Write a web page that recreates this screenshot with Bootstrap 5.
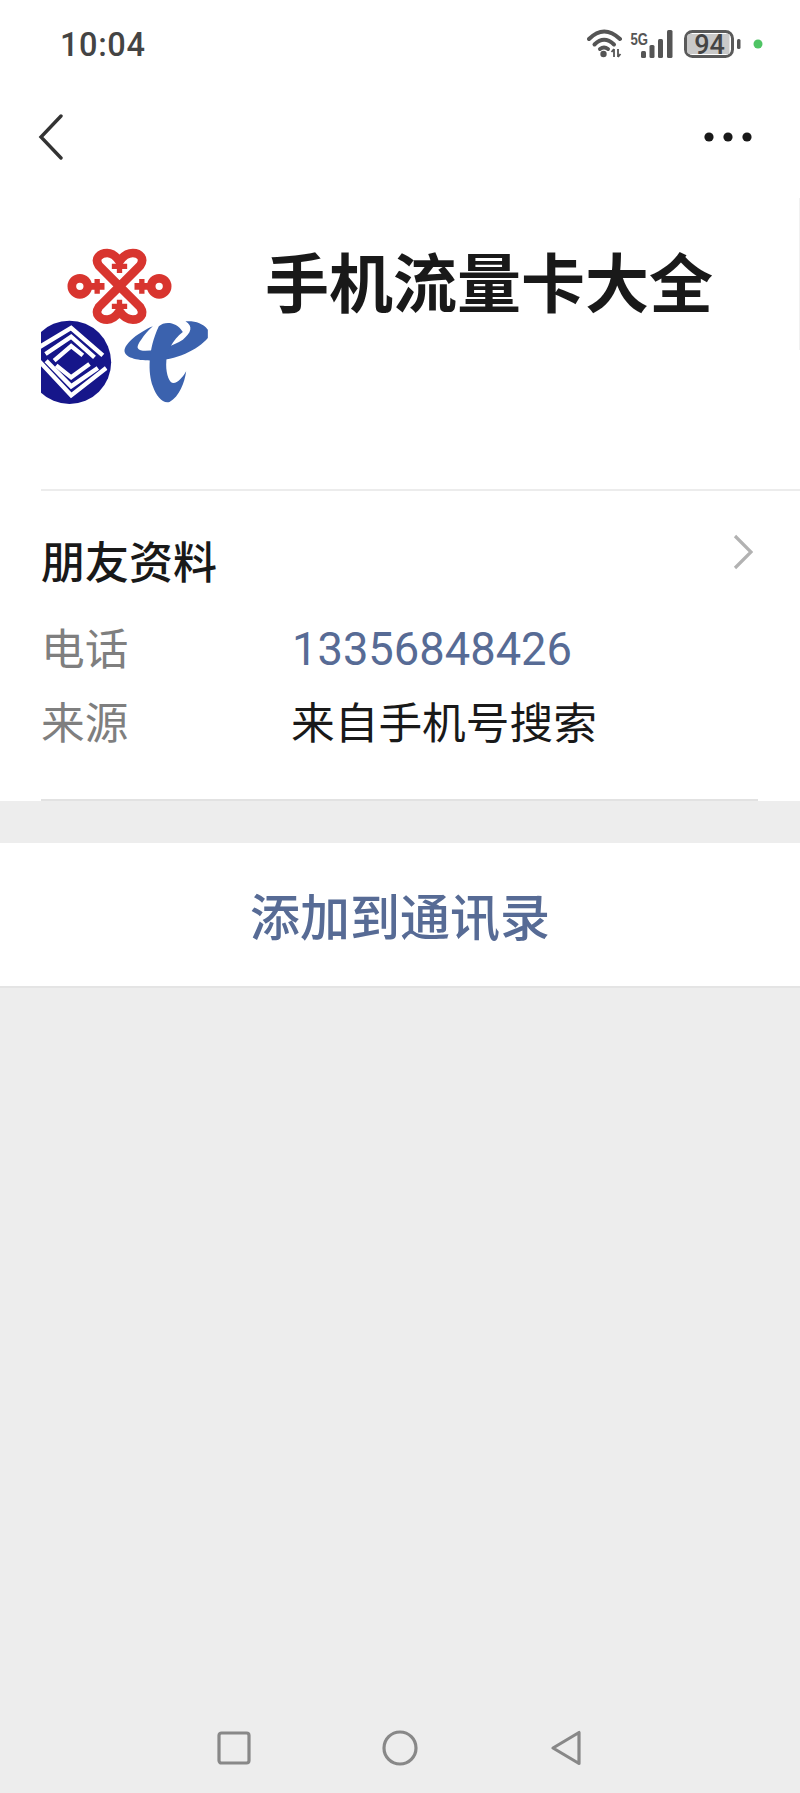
<!doctype html>
<html lang="zh">
<head>
<meta charset="utf-8">
<title>手机流量卡大全</title>
<link href="https://cdn.jsdelivr.net/npm/bootstrap@5.3.0/dist/css/bootstrap.min.css" rel="stylesheet">
<style>
html,body{margin:0;height:1793px;background:#ededed}
body{width:800px;font-family:"Noto Sans CJK SC","Liberation Sans",sans-serif;color:#191919;overflow:hidden}
.page-wrap{height:1793px}
.status-strip{height:88px;padding:0 37px 0 60px}
.clock{font-family:Roboto,sans-serif;font-weight:500;font-size:32.500px;color:#444;letter-spacing:.6px;line-height:1;padding-top:2px}
.title-bar{height:97px;padding:0 48px 0 37px}
.profile-box{padding:60px 0 84px 41px;gap:57px}
.avatar-art{width:167px;height:160px;display:block}
.profile-name{font-size:64px;font-weight:700;line-height:68px;margin:0}
.info-zone{margin-left:41px}
.info-inner{padding:39px 5px 41px 0;margin-right:42px}
.top-rule{border-top:2px solid #ececec}
.low-rule{border-bottom:2px solid #e2e2e2}
.info-head{font-size:44px;font-weight:500;line-height:60px;margin-bottom:20px}
.info-row{height:74px;font-size:43.700px}
.info-key{width:250px;color:#7f7f7f}
.info-phone{font-family:Roboto,"Liberation Sans",sans-serif;font-size:45.300px;color:#576b95;margin-left:1px;padding-top:6px}
.gap-band{height:42px}
.add-action{height:145px;font-size:50px;font-weight:500;color:#576b95;border-bottom:2px solid #e4e4e4}
.nav-keys{height:90px}
.nav-cell{width:166px}
.edge-mark{top:198px;right:0;width:1px;height:152px;background:#f1f1f1}
</style>
</head>
<body>
<div class="page-wrap d-flex flex-column position-relative">
  <div class="bg-white">
    <div class="status-strip d-flex align-items-center justify-content-between">
      <span class="clock">10:04</span>
      <svg width="176" height="32" viewBox="588 27 176 32" role="img" aria-label="status">
        <g fill="none" stroke="#555" stroke-width="4" stroke-linecap="round">
          <path d="M590 38 Q605 23 621 38"/>
          <path d="M595.500 43.500 Q605 34 615 43.500"/>
          <path d="M601 48 Q605 45 609 48"/>
        </g>
        <circle cx="604.500" cy="53" r="3.200" fill="#555"/>
        <path d="M615 48v8M612.500 51l2.500-3M619 48v8M621.500 53l-2.500 3" stroke="#555" stroke-width="1.800" fill="none"/>
        <text x="631.500" y="43.500" font-family="Liberation Sans,sans-serif" font-weight="700" font-size="16" textLength="17.500" lengthAdjust="spacingAndGlyphs" fill="#555">5G</text>
        <g fill="#555">
          <rect x="642" y="50" width="5" height="7" rx="1.500"/>
          <rect x="650.500" y="44" width="5" height="13" rx="1.500"/>
          <rect x="659" y="38" width="5" height="19" rx="1.500"/>
          <rect x="668" y="29" width="5.500" height="28" rx="1.500"/>
        </g>
        <rect x="686.500" y="30.500" width="47" height="25" rx="7" fill="#fff" stroke="#5a5a5a" stroke-width="3"/>
        <path d="M691 33h39.500v20H691q-3 0-3-3V36q0-3 3-3z" fill="#c9c9c9"/>
        <text x="710.500" y="53" text-anchor="middle" font-family="Roboto,sans-serif" font-weight="500" font-size="27" fill="#444">94</text>
        <rect x="738" y="38" width="3.500" height="10" rx="1.500" fill="#555"/>
        <circle cx="759" cy="43" r="4.500" fill="#4fc464"/>
      </svg>
    </div>
    <div class="title-bar d-flex align-items-center justify-content-between">
      <svg width="28" height="46" viewBox="0 0 28 46" role="img" aria-label="back"><path d="M24 2 4 23l20 21" fill="none" stroke="#333" stroke-width="3.400" stroke-linecap="round"/></svg>
      <svg width="48" height="10" viewBox="0 0 48 10" role="img" aria-label="more"><g fill="#191919"><circle cx="5" cy="5" r="4.600"/><circle cx="24" cy="5" r="4.600"/><circle cx="43" cy="5" r="4.600"/></g></svg>
    </div>
    <div class="profile-box d-flex align-items-start">
      <svg class="avatar-art" viewBox="65 45 500 480" role="img" aria-label="logo">
        <defs>
          <clipPath id="cm"><circle cx="90" cy="133" r="116"/></clipPath>
          <g id="knot-half">
            <path d="M165 130 103 68C88 45 108 30 128 30 145 30 156 42 165 55 174 42 185 30 205 30 225 30 242 45 227 68Z" fill="none" stroke="#d8352f" stroke-width="26" stroke-linejoin="round"/>
            <path d="M142 70H188M165 52V90" fill="none" stroke="#d8352f" stroke-width="16"/>
          </g>
        </defs>
        <g transform="translate(135 39)">
          <use href="#knot-half"/>
          <use href="#knot-half" transform="translate(0 260) scale(1 -1)"/>
          <g fill="none" stroke="#d8352f">
            <circle cx="46" cy="130" r="24" stroke-width="26"/>
            <circle cx="284" cy="130" r="24" stroke-width="26"/>
            <path d="M70 130H120M210 130H260" stroke-width="20"/>
            <path d="M98 108V152M232 108V152" stroke-width="16"/>
          </g>
        </g>
        <g transform="translate(60 264)">
          <circle cx="90" cy="133" r="125" fill="#16168a"/>
          <g clip-path="url(#cm)" fill="none" stroke="#fff" stroke-width="13">
            <path d="M-5 90 95 30 190 112"/>
            <path d="M18 108 95 56 165 118"/>
            <path d="M44 128 95 84 130 112"/>
            <path d="M-5 125 95 232 200 150"/>
            <path d="M20 128 95 205 175 150"/>
            <path d="M50 142 95 178 150 138"/>
          </g>
        </g>
        <g transform="translate(300 264)" fill="#3b62ae">
          <path d="M100 25C60 42 15 75 15 100 18 122 60 128 100 128 170 128 235 95 265 60V35C250 15 225 8 198 10 222 25 215 45 190 65 160 85 110 100 70 98 50 95 50 85 65 65 75 50 85 38 100 25Z"/>
          <path d="M118 25C135 10 170 10 190 42 160 65 140 100 140 140 140 170 150 195 162 195 175 195 188 180 200 160 195 195 180 235 150 252 130 258 110 235 100 205 85 165 85 95 118 25Z"/>
        </g>
      </svg>
      <h1 class="profile-name">手机流量卡大全</h1>
    </div>
    <div class="info-zone top-rule">
      <div class="info-inner low-rule">
        <div class="info-head d-flex justify-content-between align-items-start">
          <span>朋友资料</span>
          <svg class="mt-1" width="20" height="36" viewBox="0 0 20 36" role="img" aria-label="more"><path d="M2 2 18 18 2 34" fill="none" stroke="#b2b2b2" stroke-width="3.200"/></svg>
        </div>
        <div class="info-row d-flex align-items-center"><span class="info-key">电话</span><span class="info-phone">13356848426</span></div>
        <div class="info-row d-flex align-items-center"><span class="info-key">来源</span><span>来自手机号搜索</span></div>
      </div>
    </div>
  </div>
  <div class="gap-band"></div>
  <div class="add-action bg-white d-flex align-items-center justify-content-center">添加到通讯录</div>
  <div class="flex-grow-1"></div>
  <div class="nav-keys d-flex align-items-center justify-content-center">
    <div class="nav-cell d-flex justify-content-center"><svg width="34" height="34" viewBox="0 0 34 34" role="img" aria-label="recent"><rect x="2" y="2" width="30" height="30" rx="2.500" fill="none" stroke="#888" stroke-width="3.200"/></svg></div>
    <div class="nav-cell d-flex justify-content-center"><svg width="36" height="36" viewBox="0 0 36 36" role="img" aria-label="home"><circle cx="18" cy="18" r="16" fill="none" stroke="#888" stroke-width="3.200"/></svg></div>
    <div class="nav-cell d-flex justify-content-center"><svg width="32" height="36" viewBox="0 0 32 36" role="img" aria-label="back"><path d="M29 2.500V33.500L3 18Z" fill="none" stroke="#888" stroke-width="3.200" stroke-linejoin="round"/></svg></div>
  </div>
  <div class="edge-mark position-absolute"></div>
</div>
<script src="https://cdn.jsdelivr.net/npm/bootstrap@5.3.0/dist/js/bootstrap.bundle.min.js"></script>
</body>
</html>
